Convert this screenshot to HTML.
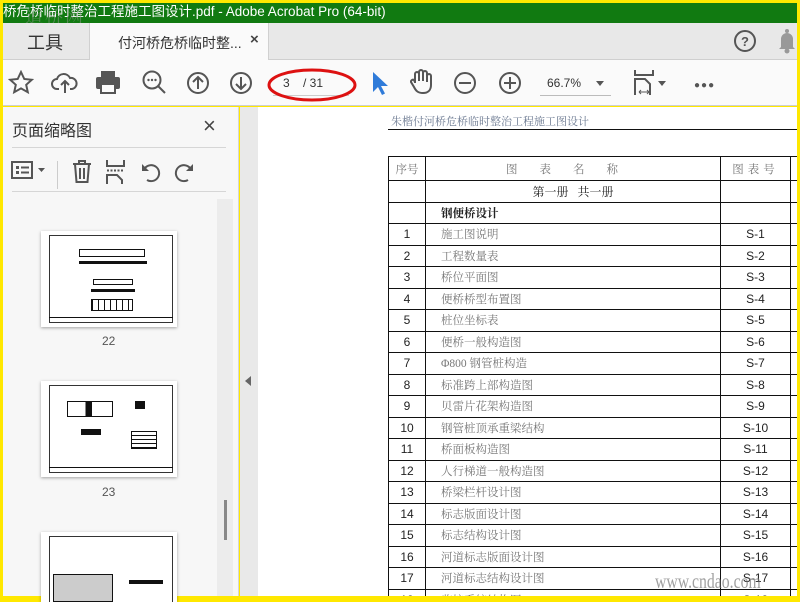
<!DOCTYPE html>
<html><head><meta charset="utf-8"><style>
*{margin:0;padding:0;box-sizing:border-box}
body{width:800px;height:600px;overflow:hidden;background:#ffe800;font-family:"Liberation Sans","Noto Sans CJK SC",sans-serif;position:relative}
.a{position:absolute}
#title{left:3px;top:3px;width:794px;height:20px;background:#117a11;color:#fff;font-size:13.5px;line-height:18px;white-space:nowrap;overflow:hidden}
#tabs{left:3px;top:23px;width:794px;height:37px;background:#e8e8e8;border-bottom:1px solid #cfcfcf}
#tb{left:3px;top:60px;width:794px;height:46px;background:#fafafa;border-bottom:1px solid #cfcfcf}
#side{left:3px;top:107px;width:236px;height:489px;background:#f7f7f7;border-right:1px solid #d6d6d6}
#strip{left:240px;top:107px;width:18px;height:489px;background:#e9e9e9}
#doc{left:258px;top:107px;width:539px;height:489px;background:#fff;overflow:hidden}
table{position:absolute;left:130px;top:49px;border-collapse:collapse;table-layout:fixed;width:412px;font-family:"Liberation Serif","Noto Serif CJK SC",serif;font-size:11.5px;color:#777}
td{border:1px solid #111;height:21.5px;text-align:center;padding:0;white-space:nowrap;overflow:hidden}
td.n{color:#222;font-family:"Liberation Sans",sans-serif;font-size:12px}
td.t{text-align:left;padding-left:15px}
svg{position:absolute}
.ic{stroke:#555;fill:none;stroke-width:2}
</style></head><body>
<div class="a" id="title">桥危桥临时整治工程施工图设计.pdf - Adobe Acrobat Pro (64-bit)</div>
<div class="a" style="left:25px;top:3px;font-size:18px;color:rgba(150,150,150,.5);font-family:'Noto Serif CJK SC',serif;letter-spacing:2px">道桥网</div>
<div class="a" id="tabs">
 <div class="a" style="left:24px;top:6px;font-size:18px;color:#333">工具</div>
 <div class="a" style="left:86px;top:0;width:180px;height:37px;background:#fafafa;border-left:1px solid #d0d0d0;border-right:1px solid #d0d0d0"></div>
 <div class="a" style="left:115px;top:10px;font-size:14px;color:#333">付河桥危桥临时整...</div>
 <div class="a" style="left:247px;top:8px;font-size:15px;color:#444;font-weight:bold">×</div>
 <svg style="left:730px;top:6px" width="24" height="24"><circle cx="12" cy="12" r="10" class="ic"/><text x="12" y="17" text-anchor="middle" font-size="13" font-weight="bold" fill="#555" font-family="Liberation Sans">?</text></svg>
 <svg style="left:774px;top:5px" width="20" height="26"><path d="M4 19V11a6 6 0 0 1 12 0v8l2 2H2z" fill="#999"/><circle cx="10" cy="3" r="2" fill="#999"/><circle cx="10" cy="23" r="2.5" fill="#999"/></svg>
</div>
<div class="a" id="tb">
 <svg style="left:5px;top:10px" width="26" height="26"><path d="M13 2l3.3 7 7.5.8-5.6 5 1.6 7.4L13 18.4 6.2 22.2l1.6-7.4-5.6-5 7.5-.8z" class="ic"/></svg>
 <svg style="left:48px;top:10px" width="28" height="26"><path d="M8 19H6a5 5 0 0 1 0-10 7 7 0 0 1 13-1 5 5 0 0 1 2 11h-2M14 23V12M10 15l4-4 4 4" class="ic"/></svg>
 <svg style="left:91px;top:9px" width="28" height="26"><rect x="7" y="2" width="14" height="6" fill="#555"/><rect x="2" y="8" width="24" height="12" rx="2" fill="#555"/><rect x="7" y="15" width="14" height="9" fill="#fafafa" stroke="#555" stroke-width="2"/></svg>
 <svg style="left:138px;top:9px" width="28" height="28"><circle cx="11" cy="11" r="8.5" class="ic"/><path d="M17 17l7 7" class="ic" stroke-width="3"/><circle cx="7.5" cy="11" r="1.2" fill="#555"/><circle cx="11" cy="11" r="1.2" fill="#555"/><circle cx="14.5" cy="11" r="1.2" fill="#555"/></svg>
 <svg style="left:182px;top:10px" width="26" height="26"><circle cx="13" cy="13" r="10" class="ic"/><path d="M13 19V7M8 12l5-5 5 5" class="ic"/></svg>
 <svg style="left:225px;top:10px" width="26" height="26"><circle cx="13" cy="13" r="10" class="ic"/><path d="M13 7v12M8 14l5 5 5-5" class="ic"/></svg>
 <div class="a" style="left:270px;top:12px;width:76px;height:24px;border-bottom:1px solid #ccc;font-size:12px;color:#333;line-height:22px;padding-left:10px">3&nbsp;&nbsp;&nbsp;&nbsp;/ 31</div>
 <svg style="left:262px;top:4px" width="96" height="40"><ellipse cx="47" cy="21" rx="43" ry="15" fill="none" stroke="#d11" stroke-width="3"/></svg>
 <svg style="left:366px;top:10px" width="20" height="26"><path d="M4 2v20l5-5 4 8 3-1.5-4-7.5h7z" fill="#2f7bd9"/></svg>
 <svg style="left:405px;top:8px" width="26" height="28"><path d="M7 15V6a2 2 0 0 1 4 0v7V4a2 2 0 0 1 4 0v9V5a2 2 0 0 1 4 0v9V8a2 2 0 0 1 4 0v9c0 5-3 8-8 8s-7-2-9-6l-3-5a2 2 0 0 1 3-2l1 2" class="ic" stroke-width="1.8"/></svg>
 <svg style="left:449px;top:10px" width="26" height="26"><circle cx="13" cy="13" r="10" class="ic"/><path d="M7 13h12" class="ic"/></svg>
 <svg style="left:494px;top:10px" width="26" height="26"><circle cx="13" cy="13" r="10" class="ic"/><path d="M7 13h12M13 7v12" class="ic"/></svg>
 <div class="a" style="left:537px;top:13px;width:71px;height:23px;border-bottom:1px solid #bbb;font-size:12px;color:#333;line-height:20px;padding-left:7px">66.7%</div>
 <div class="a" style="left:593px;top:21px;border:4px solid transparent;border-top:5px solid #555"></div>
 <svg style="left:630px;top:10px" width="22" height="26"><path d="M2 0v5h18V0" class="ic" stroke-width="2.5"/><path d="M2 25V9h10l5 5v11" class="ic" stroke-width="2.5"/><path d="M6 22h10M6 22l2-2M6 22l2 2M16 22l-2-2M16 22l-2 2" stroke="#555" stroke-width="1" fill="none"/></svg>
 <div class="a" style="left:655px;top:21px;border:4px solid transparent;border-top:5px solid #555"></div>
 <div class="a" style="left:691px;top:20px;font-size:10px;color:#555;letter-spacing:1px">●●●</div>
</div>
<div class="a" id="side">
 <div class="a" style="left:9px;top:10px;font-size:16px;color:#333">页面缩略图</div>
 <div class="a" style="left:200px;top:6px;font-size:22px;color:#444">×</div>
 <div class="a" style="left:9px;top:40px;width:214px;height:1px;background:#d6d6d6"></div>
 <svg style="left:8px;top:52px" width="40" height="22"><rect x="1" y="3" width="20" height="16" class="ic" stroke-width="1.7"/><rect x="5" y="7" width="3" height="3" fill="#555"/><rect x="5" y="12" width="3" height="3" fill="#555"/><path d="M10 8.5h8M10 13.5h8" class="ic" stroke-width="1.7"/><path d="M27 9h7l-3.5 4z" fill="#555"/></svg>
 <div class="a" style="left:54px;top:54px;width:1px;height:28px;background:#ccc"></div>
 <svg style="left:68px;top:52px" width="24" height="26"><path d="M2 5h18M8 5V2h6v3M4 5l1.5 18h11L18 5M9 9v11M13 9v11" class="ic" stroke-width="1.8"/></svg>
 <svg style="left:102px;top:52px" width="22" height="26"><path d="M2 1v6h17V1M2 25V16h10l5 5v4" class="ic" stroke-width="2.2"/><path d="M2 11.5h17" stroke="#555" stroke-width="2" stroke-dasharray="2 1.5"/></svg>
 <svg style="left:136px;top:52px" width="24" height="26"><path d="M6 9a8 8 0 1 1 2 12" class="ic" stroke-width="2.5"/><path d="M3 5l0 7 7 0z" fill="#555"/></svg>
 <svg style="left:169px;top:52px" width="24" height="26"><path d="M18 9a8 8 0 1 0-2 12" class="ic" stroke-width="2.5"/><path d="M21 5l0 7-7 0z" fill="#555"/></svg>
 <div class="a" style="left:9px;top:84px;width:214px;height:1px;background:#d6d6d6"></div>
 <div class="a" style="left:214px;top:92px;width:16px;height:397px;background:#ececec"></div>
 <div class="a" style="left:221px;top:393px;width:3px;height:40px;background:#888"></div>
 <div class="a" style="left:38px;top:124px;width:136px;height:96px;background:#fff;box-shadow:0 1px 3px rgba(0,0,0,.35)">
  <div class="a" style="left:8px;top:4px;width:124px;height:88px;border:1px solid #333"></div>
  <div class="a" style="left:38px;top:18px;width:66px;height:8px;border:1px solid #111"></div>
  <div class="a" style="left:38px;top:30px;width:68px;height:3px;background:#111"></div>
  <div class="a" style="left:52px;top:48px;width:40px;height:6px;border:1px solid #111"></div>
  <div class="a" style="left:50px;top:58px;width:44px;height:3px;background:#111"></div>
  <div class="a" style="left:50px;top:68px;width:42px;height:12px;border:1px solid #111;background:repeating-linear-gradient(90deg,#111 0 1px,#fff 1px 6px)"></div>
  <div class="a" style="left:8px;top:86px;width:124px;height:1px;background:#111"></div>
 </div>
 <div class="a" style="left:99px;top:227px;font-size:12px;color:#555">22</div>
 <div class="a" style="left:38px;top:274px;width:136px;height:96px;background:#fff;box-shadow:0 1px 3px rgba(0,0,0,.35)">
  <div class="a" style="left:8px;top:4px;width:124px;height:88px;border:1px solid #333"></div>
  <div class="a" style="left:26px;top:20px;width:46px;height:16px;border:1px solid #111;background:linear-gradient(90deg,#fff 40%,#111 40% 55%,#fff 55%)"></div>
  <div class="a" style="left:94px;top:20px;width:10px;height:8px;background:#111"></div>
  <div class="a" style="left:40px;top:48px;width:20px;height:6px;background:#111"></div>
  <div class="a" style="left:90px;top:50px;width:26px;height:18px;border:1px solid #111;background:repeating-linear-gradient(0deg,#111 0 1px,#fff 1px 4px)"></div>
  <div class="a" style="left:8px;top:86px;width:124px;height:1px;background:#111"></div>
 </div>
 <div class="a" style="left:99px;top:378px;font-size:12px;color:#555">23</div>
 <div class="a" style="left:38px;top:425px;width:136px;height:70px;background:#fff;box-shadow:0 1px 3px rgba(0,0,0,.35)">
  <div class="a" style="left:8px;top:4px;width:124px;height:66px;border:1px solid #333;border-bottom:none"></div>
  <div class="a" style="left:12px;top:42px;width:60px;height:28px;border:1px solid #111;background:#ccc"></div>
  <div class="a" style="left:88px;top:48px;width:34px;height:4px;background:#111"></div>
 </div>
</div>
<div class="a" id="strip"><div class="a" style="left:5px;top:269px;border:5px solid transparent;border-right:6px solid #666;border-left:none"></div></div>
<div class="a" id="doc">
 <div class="a" style="left:133px;top:6px;font-size:11px;color:#6a7890;font-family:'Noto Serif CJK SC',serif">朱楷付河桥危桥临时整治工程施工图设计</div>
 <div class="a" style="left:130px;top:22px;width:420px;height:1px;background:#111"></div>
 <table>
  <colgroup><col style="width:37px"><col style="width:295px"><col style="width:70px"><col style="width:10px"></colgroup>
  <tr style="height:24px"><td>序号</td><td style="letter-spacing:22px">图表名称</td><td style="letter-spacing:4px">图表号</td><td></td></tr>
  <tr><td></td><td style="color:#222;font-size:12px">第一册&nbsp;&nbsp;&nbsp;共一册</td><td></td><td></td></tr>
  <tr><td></td><td class="t" style="color:#222;font-weight:bold">钢便桥设计</td><td></td><td></td></tr>
  <tr><td class="n">1</td><td class="t">施工图说明</td><td class="n">S-1</td><td></td></tr>
  <tr><td class="n">2</td><td class="t">工程数量表</td><td class="n">S-2</td><td></td></tr>
  <tr><td class="n">3</td><td class="t">桥位平面图</td><td class="n">S-3</td><td></td></tr>
  <tr><td class="n">4</td><td class="t">便桥桥型布置图</td><td class="n">S-4</td><td></td></tr>
  <tr><td class="n">5</td><td class="t">桩位坐标表</td><td class="n">S-5</td><td></td></tr>
  <tr><td class="n">6</td><td class="t">便桥一般构造图</td><td class="n">S-6</td><td></td></tr>
  <tr><td class="n">7</td><td class="t">Φ800 钢管桩构造</td><td class="n">S-7</td><td></td></tr>
  <tr><td class="n">8</td><td class="t">标准跨上部构造图</td><td class="n">S-8</td><td></td></tr>
  <tr><td class="n">9</td><td class="t">贝雷片花架构造图</td><td class="n">S-9</td><td></td></tr>
  <tr><td class="n">10</td><td class="t">钢管桩顶承重梁结构</td><td class="n">S-10</td><td></td></tr>
  <tr><td class="n">11</td><td class="t">桥面板构造图</td><td class="n">S-11</td><td></td></tr>
  <tr><td class="n">12</td><td class="t">人行梯道一般构造图</td><td class="n">S-12</td><td></td></tr>
  <tr><td class="n">13</td><td class="t">桥梁栏杆设计图</td><td class="n">S-13</td><td></td></tr>
  <tr><td class="n">14</td><td class="t">标志版面设计图</td><td class="n">S-14</td><td></td></tr>
  <tr><td class="n">15</td><td class="t">标志结构设计图</td><td class="n">S-15</td><td></td></tr>
  <tr><td class="n">16</td><td class="t">河道标志版面设计图</td><td class="n">S-16</td><td></td></tr>
  <tr><td class="n">17</td><td class="t">河道标志结构设计图</td><td class="n">S-17</td><td></td></tr>
  <tr><td class="n">18</td><td class="t">监控系统结构图</td><td class="n">S-18</td><td></td></tr>
 </table>
 <div class="a" style="left:397px;top:462px;font-size:21px;color:rgba(120,120,120,.7);font-family:'Liberation Serif',serif;transform:scaleX(.75);transform-origin:left">www.cndao.com</div>
</div>
</body></html>
